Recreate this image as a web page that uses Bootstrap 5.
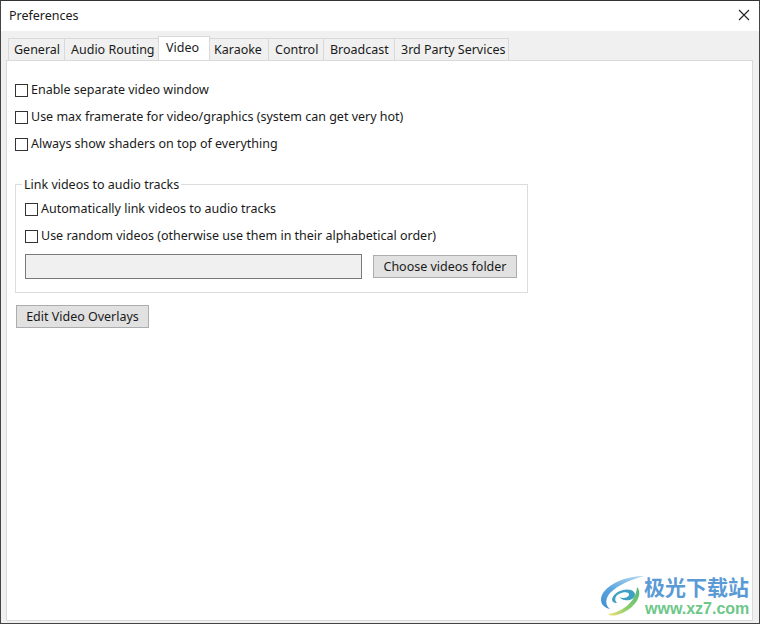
<!DOCTYPE html>
<html lang="en"><head><meta charset="utf-8"><title>Preferences</title>
<link href="https://cdn.jsdelivr.net/npm/bootstrap@5.3.0/dist/css/bootstrap.min.css" rel="stylesheet">
<style>
html,body{height:100%;margin:0;background:#fff}
body{font-family:"Noto Sans","Open Sans",sans-serif;font-size:12.5px;letter-spacing:-.008px;color:#1a1a1a;overflow:hidden}
.winframe{height:624px;width:760px;border-top:1px solid #333;border-left:1px solid #444;border-right:1px solid #444;border-bottom:1px solid #444;background:#f0f0f0;position:relative}
.wintitle{height:30px;background:#fff;padding:0 0 2px 8px;line-height:27px}
.winclose{width:12px;height:12px;margin-right:9px}
.tabstrip{padding:6px 0 0 7px;height:29px;position:relative;z-index:1}
.tabitem{height:22px;margin-top:1px;border:1px solid #d9d9d9;border-left-width:0;border-bottom:0;background:#f0f0f0;line-height:22px;white-space:nowrap}
.tab-general{width:57px;padding-left:5px;border-left-width:1px}
.tab-routing{width:94px;padding-left:6px}
.tab-video{width:52px;height:24px;margin-top:-1px;margin-bottom:-1px;margin-left:-1px;background:#fff;border-left-width:1px;padding-left:7px}
.tab-karaoke{width:59px;padding-left:4px}
.tab-control{width:55px;padding-left:6px}
.tab-broadcast{width:71px;padding-left:6px}
.tab-services{width:114px;padding-left:6px}
.tabbody{height:561px;margin:0 6px 0 5px;background:#fff;border:1px solid #d9d9d9;padding:16px 8px 0 8px}
.chkrow{height:27px}
.chkbox{width:13px;height:13px;border:1px solid #333;background:#fff;flex:none;margin-right:3px}
.grpbox{width:513px;height:109px;border:1px solid #dcdcdc;margin-top:26px;padding:11px 10px 0 9px;position:relative}
.grplabel{position:absolute;left:6px;top:-8px;background:#fff;padding:0 2px;line-height:16px}
.pathbox{width:337px;height:25px;background:#f0f0f0;border:1px solid #7a7a7a}
.wbtn{height:23px;background:#e1e1e1;border:1px solid #adadad;border-radius:0;padding:0;font-size:12.5px;color:#1a1a1a;line-height:20px;letter-spacing:-.008px}
.folderbtn{width:144px}
.overlaybtn{width:133px;margin:12px 0 0 1px;display:block}
.wm{position:absolute;right:9px;bottom:5px;width:150px;height:44px}
.wmicon{flex:none}
.wmcn{font-family:"Noto Sans CJK SC",sans-serif;font-weight:700;font-size:21px;color:#5b9bd5;line-height:23px;letter-spacing:0;white-space:nowrap;margin-top:1px}
.wmurl{font-family:"Liberation Sans",sans-serif;font-weight:700;font-size:16px;color:#6cc789;line-height:19px;letter-spacing:0;margin:1px 0 0 1px}
</style></head><body>
<div class="winframe">
 <div class="wintitle d-flex justify-content-between align-items-center"><span>Preferences</span>
  <svg class="winclose" viewBox="0 0 12 12"><path d="M1 1 11 11M11 1 1 11" stroke="#222" stroke-width="1.1" fill="none"/></svg></div>
 <div class="tabstrip d-flex">
  <div class="tabitem tab-general">General</div>
  <div class="tabitem tab-routing">Audio Routing</div>
  <div class="tabitem tab-video">Video</div>
  <div class="tabitem tab-karaoke">Karaoke</div>
  <div class="tabitem tab-control">Control</div>
  <div class="tabitem tab-broadcast">Broadcast</div>
  <div class="tabitem tab-services">3rd Party Services</div>
 </div>
 <div class="tabbody">
  <div class="chkrow d-flex align-items-center"><span class="chkbox"></span><span>Enable separate video window</span></div>
  <div class="chkrow d-flex align-items-center"><span class="chkbox"></span><span>Use max framerate for video/graphics (system can get very hot)</span></div>
  <div class="chkrow d-flex align-items-center"><span class="chkbox"></span><span>Always show shaders on top of everything</span></div>
  <div class="grpbox"><span class="grplabel">Link videos to audio tracks</span>
   <div class="chkrow d-flex align-items-center"><span class="chkbox"></span><span>Automatically link videos to audio tracks</span></div>
   <div class="chkrow d-flex align-items-center"><span class="chkbox"></span><span>Use random videos (otherwise use them in their alphabetical order)</span></div>
   <div class="d-flex justify-content-between align-items-center mt-1"><div class="pathbox"></div><button class="btn wbtn folderbtn" type="button">Choose videos folder</button></div>
  </div>
  <button class="btn wbtn overlaybtn" type="button">Edit Video Overlays</button>
 </div>
 <div class="wm d-flex">
  <svg class="wmicon" width="44" height="44" viewBox="0 0 44 44"><defs><linearGradient id="lg" x1="1" y1="0" x2="0" y2="1"><stop offset="0" stop-color="#4fb87a"/><stop offset=".6" stop-color="#8fd06a"/><stop offset="1" stop-color="#f5e27a"/></linearGradient><linearGradient id="bl" x1="1" y1="0" x2="0" y2="1"><stop offset="0" stop-color="#bcdcf2"/><stop offset=".6" stop-color="#5aa5de"/><stop offset="1" stop-color="#3f8fd0"/></linearGradient></defs><path d="M44 2C28 2 8 9 2 21c-3 7 1 13 8 14C5 31 5 25 10 19 18 11 30 6 44 2Z" fill="url(#bl)"/><path d="M12 25c2-7 12-11 19-9 6 2 5 8-1 10-5 1-10-1-10-3 2 2 8 1 9-2 1-3-5-4-10-1-4 2-5 6-2 9-4 0-5-2-5-4Z" fill="#3fa0c4"/><path d="M37 13c7 8-3 22-17 27-6 2-10 2-12 0 12-1 28-11 29-27Z" fill="url(#lg)"/></svg>
  <div><div class="wmcn">极光下载站</div><div class="wmurl">www.xz7.com</div></div>
 </div>
</div>
</body></html>
